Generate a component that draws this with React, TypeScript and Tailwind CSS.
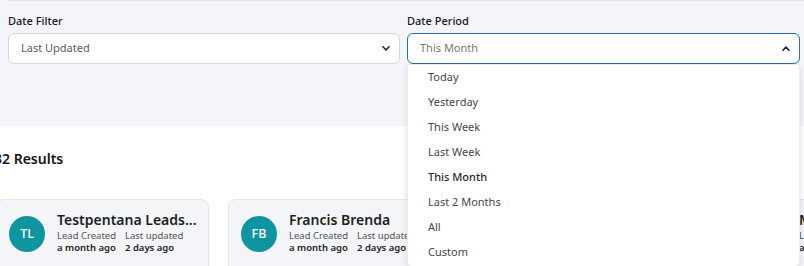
import React from "react";

const Chevron = ({ up }: { up?: boolean }) => (
  <svg width="8" height="5" viewBox="0 0 8 5" className="shrink-0">
    <polyline
      points={up ? "1,4.2 4,1 7,4.2" : "1,0.8 4,4 7,0.8"}
      fill="none"
      stroke="#1b2440"
      strokeWidth="1.6"
      strokeLinecap="round"
      strokeLinejoin="round"
    />
  </svg>
);

const items = ["Today", "Yesterday", "This Week", "Last Week", "This Month", "Last 2 Months", "All", "Custom"];

const Card = ({
  initials,
  name,
  width,
}: {
  initials: string;
  name: string;
  width: string;
}) => (
  <div className={`${width} shrink-0 h-[90px] rounded-lg border border-[#e3e5ea] bg-[#f4f5f8] pl-3 pt-4 flex gap-3`}>
    <div className="w-[36px] h-[36px] rounded-full bg-[#0e959f] flex items-center justify-center text-white text-[12.5px] font-medium shrink-0">
      {initials}
    </div>
    <div className="flex flex-col -mt-[5px]">
      <div className="text-[14px] font-semibold text-[#1e1e24] leading-[18px] whitespace-nowrap">{name}</div>
      <div className="flex mt-[1px]">
        <div className="flex flex-col w-[68px]">
          <span className="text-[9.5px] text-[#555] leading-[12px] whitespace-nowrap">Lead Created</span>
          <span className="text-[9.5px] font-semibold text-[#222] leading-[12px] whitespace-nowrap">a month ago</span>
        </div>
        <div className="flex flex-col">
          <span className="text-[9.5px] text-[#555] leading-[12px] whitespace-nowrap">Last updated</span>
          <span className="text-[9.5px] font-semibold text-[#222] leading-[12px] whitespace-nowrap">2 days ago</span>
        </div>
      </div>
    </div>
  </div>
);

export default function App() {
  return (
    <div className="w-[804px] h-[266px] overflow-hidden bg-white" style={{ fontFamily: '"Noto Sans", "Open Sans", sans-serif' }}>
      <div className="h-[126px] bg-[#f4f5f8] pr-[4px] pl-2">
        <div className="h-px bg-[#e4e6ea] mr-[-4px]" />
        <div className="grid grid-cols-[392px_393px] gap-[7px] pt-[12px]">
          <div className="flex flex-col">
            <label className="text-[11px] font-medium text-[#15152a] leading-[16px] mb-[4px]">Date Filter</label>
            <div className="h-[31px] rounded-[6px] border border-[#d6d8dd] bg-white flex items-center justify-between pl-[12px] pr-[9px]">
              <span className="text-[11px] text-[#5d5868]">Last Updated</span>
              <Chevron />
            </div>
          </div>
          <div className="flex flex-col relative">
            <label className="text-[11px] font-medium text-[#15152a] leading-[16px] mb-[4px]">Date Period</label>
            <div className="h-[31px] rounded-[6px] border border-[#2a6eab] bg-white flex items-center justify-between pl-[12px] pr-[9px]">
              <span className="text-[11px] text-[#777]">This Month</span>
              <Chevron up />
            </div>
            <div className="absolute z-10 left-0 top-[51px] w-[393px] bg-white rounded-b-[6px] shadow-[0_2px_6px_rgba(0,0,0,0.12)] border border-[#ececf0] pb-[1px]">
              {items.map((it) => (
                <div
                  key={it}
                  className={`h-[25px] flex items-center pl-[20px] text-[11px] ${
                    it === "This Month" ? "font-medium text-[#2a2a2a]" : "text-[#464646]"
                  }`}
                >
                  {it}
                </div>
              ))}
            </div>
          </div>
        </div>
      </div>
      <div className="bg-white -ml-[6px]">
        <div className="pt-[23px] text-[14px] font-semibold text-[#151515] leading-[20px]">32 Results</div>
        <div className="mt-[30px] ml-[2px] flex gap-[19px]">
          <Card initials="TL" name="Testpentana Leads..." width="w-[213px]" />
          <Card initials="FB" name="Francis Brenda" width="w-[491px]" />
          <Card initials="MJ" name="Mark Johnson" width="w-[213px]" />
        </div>
      </div>
    </div>
  );
}
